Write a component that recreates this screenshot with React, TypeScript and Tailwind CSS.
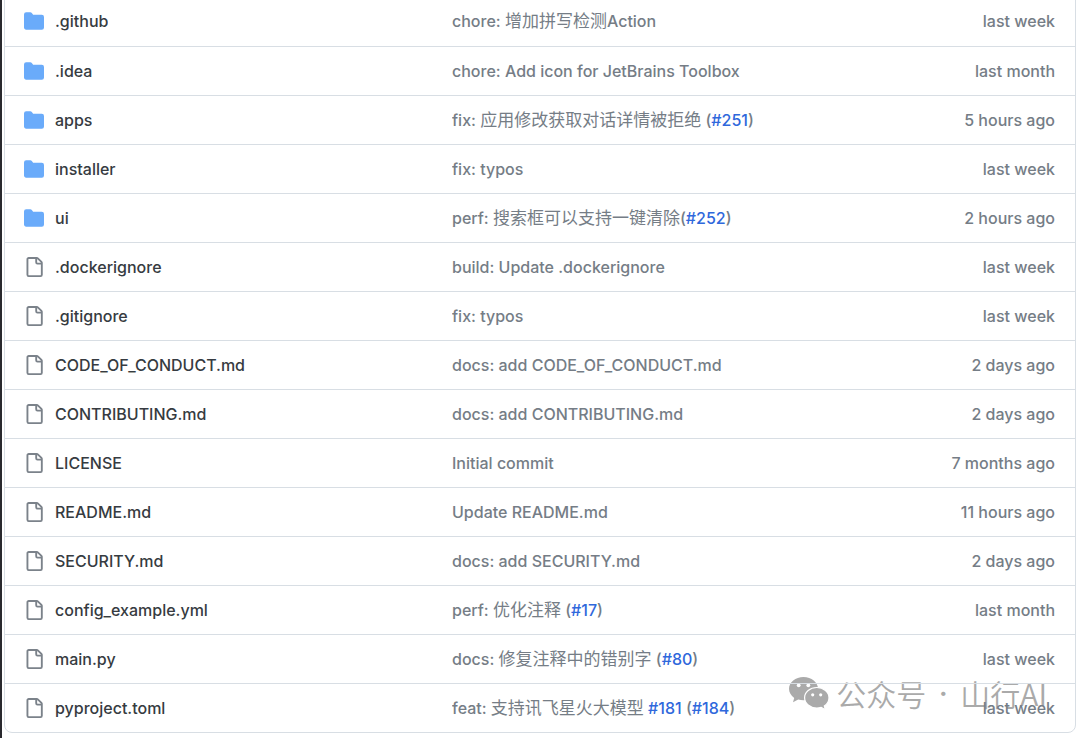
import type { ReactNode } from "react";

type Entry = {
  name: string;
  kind: "dir" | "file";
  message: ReactNode;
  updated: string;
};

function Zh({ children }: { children: ReactNode }) {
  return <span className="text-[17px] font-normal">{children}</span>;
}

function Issue({ id }: { id: number }) {
  return (
    <a href={`#${id}`} className="text-[#2f68dc] hover:underline">
      #{id}
    </a>
  );
}

const entries: Entry[] = [
  { name: ".github", kind: "dir", message: <>chore: <Zh>增加拼写检测</Zh>Action</>, updated: "last week" },
  { name: ".idea", kind: "dir", message: "chore: Add icon for JetBrains Toolbox", updated: "last month" },
  {
    name: "apps",
    kind: "dir",
    message: <>fix: <Zh>应用修改获取对话详情被拒绝</Zh> (<Issue id={251} />)</>,
    updated: "5 hours ago",
  },
  { name: "installer", kind: "dir", message: "fix: typos", updated: "last week" },
  {
    name: "ui",
    kind: "dir",
    message: <>perf: <Zh>搜索框可以支持一键清除</Zh>(<Issue id={252} />)</>,
    updated: "2 hours ago",
  },
  { name: ".dockerignore", kind: "file", message: "build: Update .dockerignore", updated: "last week" },
  { name: ".gitignore", kind: "file", message: "fix: typos", updated: "last week" },
  { name: "CODE_OF_CONDUCT.md", kind: "file", message: "docs: add CODE_OF_CONDUCT.md", updated: "2 days ago" },
  { name: "CONTRIBUTING.md", kind: "file", message: "docs: add CONTRIBUTING.md", updated: "2 days ago" },
  { name: "LICENSE", kind: "file", message: "Initial commit", updated: "7 months ago" },
  { name: "README.md", kind: "file", message: "Update README.md", updated: "11 hours ago" },
  { name: "SECURITY.md", kind: "file", message: "docs: add SECURITY.md", updated: "2 days ago" },
  {
    name: "config_example.yml",
    kind: "file",
    message: <>perf: <Zh>优化注释</Zh> (<Issue id={17} />)</>,
    updated: "last month",
  },
  {
    name: "main.py",
    kind: "file",
    message: <>docs: <Zh>修复注释中的错别字</Zh> (<Issue id={80} />)</>,
    updated: "last week",
  },
  {
    name: "pyproject.toml",
    kind: "file",
    message: <>feat: <Zh>支持讯飞星火大模型</Zh> <Issue id={181} /> (<Issue id={184} />)</>,
    updated: "last week",
  },
];

function FolderIcon() {
  return (
    <svg viewBox="0 0 16 16" fill="currentColor" aria-hidden="true" className="size-5 shrink-0 text-[#6aabfa]">
      <path d="M1.75 1A1.75 1.75 0 0 0 0 2.75v10.5C0 14.216.784 15 1.75 15h12.5A1.75 1.75 0 0 0 16 13.25v-8.5A1.75 1.75 0 0 0 14.25 3H7.5a.25.25 0 0 1-.2-.1l-.9-1.2C6.07 1.26 5.55 1 5 1H1.75Z" />
    </svg>
  );
}

function FileIcon() {
  return (
    <svg viewBox="0 0 16 16" fill="currentColor" aria-hidden="true" className="size-5 shrink-0 text-[#7b828a]">
      <path d="M2 1.75C2 .784 2.784 0 3.75 0h6.586c.464 0 .909.184 1.237.513l2.914 2.914c.329.328.513.773.513 1.237v9.586A1.75 1.75 0 0 1 13.25 16h-9.5A1.75 1.75 0 0 1 2 14.25Zm1.75-.25a.25.25 0 0 0-.25.25v12.5c0 .138.112.25.25.25h9.5a.25.25 0 0 0 .25-.25V6h-2.75A1.75 1.75 0 0 1 9 4.25V1.5Zm6.75.062V4.25c0 .138.112.25.25.25h2.688l-.011-.013-2.914-2.914-.013-.011Z" />
    </svg>
  );
}

function WechatIcon() {
  return (
    <svg viewBox="0 0 40 34" fill="currentColor" aria-hidden="true" className="h-[34px] w-10 shrink-0">
      <path d="M14.5 1C6.5 1 0 6.2 0 12.8c0 3.700 2 6.900 5.200 9.100L4 26.200l5.200-2.700c1.700.5 3.500.7 5.300.7 8 0 14.500-5 14.500-11.500S22.500 1 14.500 1Z" />
      <path
        d="M27.8 11.5c-6.800 0-12.200 4.600-12.200 10.200S21 32 27.800 32c1.500 0 3-.2 4.400-.7l4.200 2.400-1.100-3.700c2.900-1.900 4.700-4.900 4.700-8.300 0-5.600-5.400-10.200-12.200-10.200Z"
        stroke="white"
        strokeWidth="1.2"
      />
      <g fill="white">
        <circle cx="9.7" cy="9.3" r="1.9" />
        <circle cx="19.3" cy="9.3" r="1.9" />
        <circle cx="23.7" cy="18.8" r="1.6" />
        <circle cx="31.7" cy="18.8" r="1.6" />
      </g>
    </svg>
  );
}

function Row({ entry }: { entry: Entry }) {
  return (
    <tr className="h-[49px] border-t border-[#d8dee4] first:border-t-0">
      <td className="py-0 pl-[19px]">
        <div className="flex items-center gap-[11px]">
          {entry.kind === "dir" ? <FolderIcon /> : <FileIcon />}
          <a href={`#${entry.name}`} className="truncate text-[#363b41] hover:underline">
            {entry.name}
          </a>
        </div>
      </td>
      <td className="truncate py-0 text-[#757d86]">{entry.message}</td>
      <td className="py-0 pr-5 text-right whitespace-nowrap text-[#757d86]">{entry.updated}</td>
    </tr>
  );
}

export default function App() {
  return (
    <main className="overflow-hidden border-l-2 border-[#29292e] bg-white pr-1 pb-[5px] pl-0.5 font-['Inter','Noto_Sans_CJK_SC',sans-serif] text-[16px] leading-6 font-medium">
      <div className="relative -mt-1 rounded-b-lg border border-[#d8dee4]">
        {/* account stamp, sits under the table text */}
        <div className="absolute right-7 bottom-[21px] flex items-center gap-[7px] text-[#aaaaaa]">
          <WechatIcon />
          <span className="flex font-['Noto_Sans_CJK_SC',sans-serif] text-[30px] leading-9 font-[350]">
            公众号
            <span className="w-[34px] text-center font-['Inter',sans-serif] font-medium">·</span>
            山行AI
          </span>
        </div>
        <table className="relative w-full table-fixed border-collapse">
          <colgroup>
            <col className="w-[447px]" />
            <col />
            <col className="w-[180px]" />
          </colgroup>
          <tbody>
            {entries.map((entry) => (
              <Row key={entry.name} entry={entry} />
            ))}
          </tbody>
        </table>
      </div>
    </main>
  );
}
